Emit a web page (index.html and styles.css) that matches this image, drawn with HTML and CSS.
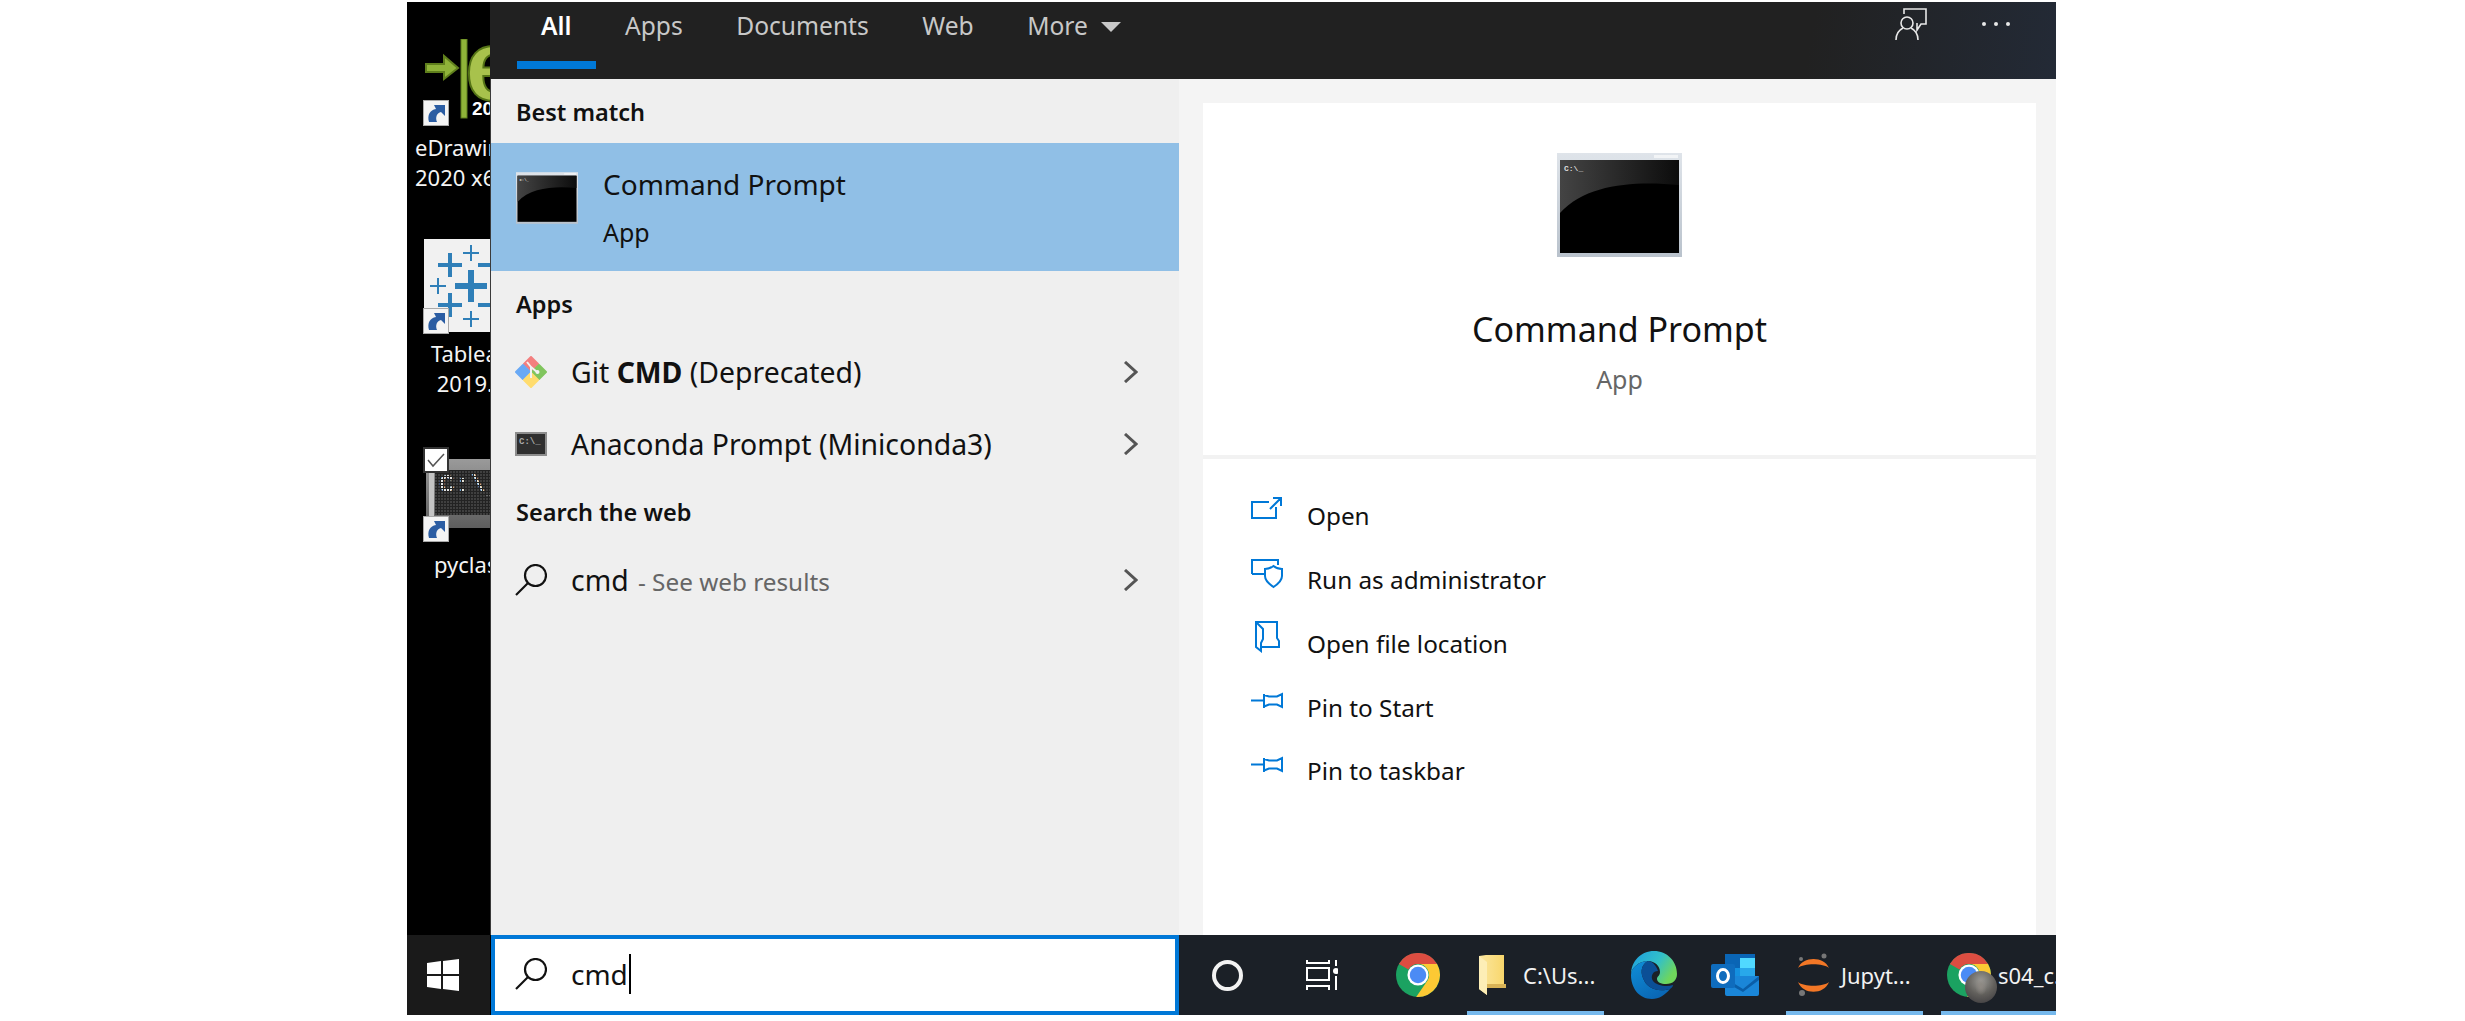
FILE: index.html
```html
<!DOCTYPE html>
<html lang="en">
<head>
<meta charset="UTF-8" />
<title>Command Prompt - Windows search</title>
<link rel="stylesheet" href="styles.css">
</head>
<body>

<!-- shared icons -->
<svg class="defs" width="0" height="0" aria-hidden="true">
  <defs>
    <linearGradient id="cmdGloss" x1="0" y1="0" x2="1" y2="0">
      <stop offset="0" stop-color="#444"/><stop offset="1" stop-color="#0c0c0c"/>
    </linearGradient>
    <linearGradient id="cmdFrame" x1="0" y1="0" x2="0" y2="1">
      <stop offset="0" stop-color="#dfe4ea"/><stop offset="1" stop-color="#b9c2cc"/>
    </linearGradient>
    <linearGradient id="edgeTop" x1="0" y1="0" x2="1" y2="0.5">
      <stop offset="0" stop-color="#1b9de2"/><stop offset="0.6" stop-color="#33c0c8"/><stop offset="1" stop-color="#6fd65c"/>
    </linearGradient>
    <linearGradient id="edgeBody" x1="0" y1="0" x2="0.6" y2="1">
      <stop offset="0" stop-color="#0f8fd8"/><stop offset="1" stop-color="#0a67b5"/>
    </linearGradient>
    <linearGradient id="folderFill" x1="0" y1="0" x2="1" y2="0">
      <stop offset="0" stop-color="#fbe7a0"/><stop offset="1" stop-color="#f8d568"/>
    </linearGradient>
    <linearGradient id="pyFrame" x1="0" y1="0" x2="0" y2="1">
      <stop offset="0" stop-color="#9a9a9a"/><stop offset="1" stop-color="#5e5e5e"/>
    </linearGradient>
    <pattern id="pyGrid" width="3" height="3" patternUnits="userSpaceOnUse">
      <rect width="2" height="2" fill="#3f3f3f"/>
    </pattern>
    <pattern id="pyDots" width="3" height="3" patternUnits="userSpaceOnUse">
      <rect width="2" height="2" fill="#e2e2e2"/>
    </pattern>

    <symbol id="i-shortcut" viewBox="0 0 26 26">
      <rect x="0.5" y="0.5" width="25" height="25" fill="#f4f4f4" stroke="#a9a9a9"/>
      <path d="M6 22C4 15 7 10 13 9L11 5H22V16L18 12C14 13 12 17 14 22Z" fill="#2b5da3"/>
    </symbol>

    <symbol id="i-cmd" viewBox="0 0 125 104">
      <rect x="0" y="0" width="125" height="104" fill="url(#cmdFrame)"/>
      <rect x="3" y="7" width="119" height="93" fill="#000"/>
      <path d="M3 7H122V32C80 28 30 30 3 60Z" fill="url(#cmdGloss)"/>
      <rect x="97" y="2" width="24" height="3" fill="#f2f4f6"/>
      <text x="7" y="18" class="cmd-prompt">C:\_</text>
    </symbol>

    <symbol id="i-search" viewBox="0 0 32 32">
      <circle cx="20.5" cy="11.5" r="10.5" fill="none" stroke="#111" stroke-width="2.2"/>
      <path d="M13 19L1 31" fill="none" stroke="#111" stroke-width="2.2"/>
    </symbol>

    <symbol id="i-chevron" viewBox="0 0 15 22">
      <path d="M2 1L13 11L2 21" fill="none" stroke="#555" stroke-width="3"/>
    </symbol>

    <symbol id="i-pin" viewBox="0 0 32 16">
      <path d="M0 7.500H13M13 1V15M13 2L18 3.500H26L31 1V14L26 11.500H18L13 13.500" fill="none" stroke="#0078d7" stroke-width="2"/>
    </symbol>

    <symbol id="i-chrome" viewBox="0 0 48 48">
      <circle cx="24" cy="24" r="24" fill="#1ba261"/>
      <path d="M3.200 12A24 24 0 0 1 44.800 12H24A12 12 0 0 0 13.600 18Z" fill="#dc4d41"/>
      <path d="M24 12H44.800A24 24 0 0 1 22 47.900L34.400 30A12 12 0 0 0 24 12Z" fill="#fcc934"/>
      <circle cx="24" cy="24" r="11.500" fill="#fff"/>
      <circle cx="24" cy="24" r="9" fill="#4b8bf5"/>
    </symbol>
  </defs>
</svg>

<div class="screen">

  <!-- desktop icons behind the start menu -->
  <div class="desktop">
    <div class="desk-app app-edrawings">
      <svg class="edraw-mark" viewBox="0 0 44 80">
        <path d="M1 25H19V17L33 29L19 40V33H1Z" fill="#8fb339" stroke="#5f7f1c" stroke-width="2"/>
        <rect x="36" y="0" width="6" height="79" fill="#8fb339" stroke="#5f7f1c"/>
      </svg>
      <span class="edraw-e">e</span>
      <span class="edraw-year">20</span>
    </div>
    <svg class="badge badge-edraw"><use href="#i-shortcut"/></svg>
    <div class="desk-label label-edraw">eDrawings<br>2020 x64</div>

    <svg class="tableau-tile" viewBox="0 0 93 93">
      <rect width="93" height="93" fill="#f1f1f1"/>
      <g fill="#2f7fb8">
        <path d="M44 31H50V44H63V50H50V63H44V50H31V44H44Z"/>
        <path d="M24 14H28V24H38V28H28V38H24V28H14V24H24Z"/>
        <path d="M24 54H28V64H38V68H28V78H24V68H14V64H24Z"/>
        <path d="M66 14H70V24H80V28H70V38H66V28H54V24H66Z"/>
        <path d="M66 54H70V64H80V68H70V78H66V68H54V64H66Z"/>
        <path d="M46 6H48V13H55V15H48V22H46V15H39V13H46Z"/>
        <path d="M46 72H48V79H55V81H48V88H46V81H39V79H46Z"/>
        <path d="M13 39H15V46H22V48H15V55H13V48H6V46H13Z"/>
      </g>
    </svg>
    <svg class="badge badge-tableau"><use href="#i-shortcut"/></svg>
    <div class="desk-label label-tableau">Tableau<br>2019.4</div>

    <svg class="pyclass-icon" viewBox="0 0 90 69">
      <rect width="90" height="69" fill="url(#pyFrame)"/>
      <rect x="3" y="2" width="5" height="65" fill="#c4c4c4"/>
      <rect x="9" y="11" width="81" height="45" fill="#222"/>
      <rect x="9" y="11" width="81" height="45" fill="url(#pyGrid)"/>
      <text x="13" y="33" class="py-prompt" fill="url(#pyDots)">C:\_</text>
    </svg>
    <svg class="check-box" viewBox="0 0 26 26">
      <rect x="1" y="1" width="24" height="24" fill="#fff" stroke="#333" stroke-width="2"/>
      <path d="M5 13L10 19L21 7" fill="none" stroke="#555" stroke-width="1.500"/>
    </svg>
    <svg class="badge badge-py"><use href="#i-shortcut"/></svg>
    <div class="desk-label label-py">pyclass</div>
  </div>

  <!-- filter tabs -->
  <header class="topbar">
    <nav class="tabs">
      <a class="tab active">All</a>
      <a class="tab">Apps</a>
      <a class="tab">Documents</a>
      <a class="tab">Web</a>
      <a class="tab">More<span class="caret-down"></span></a>
    </nav>
    <div class="top-actions">
      <svg class="feedback" viewBox="0 0 32 32" fill="none" stroke="#e8e8e8" stroke-width="1.600">
        <path d="M9 6V1H31V16H26L22 22V15"/>
        <circle cx="12" cy="15" r="6"/>
        <path d="M1 32C1 26 4 22 8 20M23 32C23 26 20 22 16 20"/>
      </svg>
      <span class="dots"><i></i><i></i><i></i></span>
    </div>
  </header>

  <!-- results -->
  <section class="results">
    <h2 class="group-title">Best match</h2>
    <div class="best-row">
      <svg class="best-icon"><use href="#i-cmd"/></svg>
      <div>
        <div class="best-name">Command Prompt</div>
        <div class="best-type">App</div>
      </div>
    </div>

    <h2 class="group-title title-apps">Apps</h2>
    <div class="row">
      <svg class="row-icon" viewBox="0 0 32 32">
        <path d="M16 1L23 8L16 15L9 8Z" fill="#f37f7f" stroke="#f37f7f" stroke-linejoin="round" stroke-width="2"/>
        <path d="M8 9L15 16L8 23L1 16Z" fill="#69a9f5" stroke="#69a9f5" stroke-linejoin="round" stroke-width="2"/>
        <path d="M24 9L31 16L24 23L17 16Z" fill="#80c55e" stroke="#80c55e" stroke-linejoin="round" stroke-width="2"/>
        <path d="M16 17L23 24L16 31L9 24Z" fill="#ffdc6e" stroke="#ffdc6e" stroke-linejoin="round" stroke-width="2"/>
        <path d="M12 6L16 11V22M16 11L22 16" fill="none" stroke="#f2f2f2" stroke-width="2"/>
        <circle cx="22.500" cy="16" r="2" fill="#f2f2f2"/>
      </svg>
      <span class="row-text">Git <b>CMD</b> (Deprecated)</span>
      <svg class="chevron"><use href="#i-chevron"/></svg>
    </div>
    <div class="row">
      <svg class="row-icon" viewBox="0 0 32 32">
        <rect x="0" y="4" width="32" height="24" fill="#8d8d8d"/>
        <rect x="2" y="6" width="28" height="20" fill="#2f2f2f"/>
        <text x="4" y="16" class="ana-prompt">C:\_</text>
      </svg>
      <span class="row-text">Anaconda Prompt (Miniconda3)</span>
      <svg class="chevron"><use href="#i-chevron"/></svg>
    </div>

    <h2 class="group-title title-web">Search the web</h2>
    <div class="row">
      <svg class="row-icon"><use href="#i-search"/></svg>
      <span class="row-text">cmd<span class="web-hint"> - See web results</span></span>
      <svg class="chevron"><use href="#i-chevron"/></svg>
    </div>
  </section>

  <!-- preview pane -->
  <aside class="preview">
    <div class="card">
      <div class="hero">
        <svg class="hero-icon"><use href="#i-cmd"/></svg>
        <div class="hero-name">Command Prompt</div>
        <div class="hero-type">App</div>
      </div>
      <ul class="actions">
        <li>
          <svg class="act-icon" viewBox="0 0 32 32" fill="none" stroke="#0078d7" stroke-width="2">
            <path d="M18 8H1V24H25V13M19 15L29 5M22 4H30V12"/>
          </svg>
          Open
        </li>
        <li>
          <svg class="act-icon" viewBox="0 0 32 32" fill="none" stroke="#0078d7" stroke-width="2">
            <path d="M1 16V2H27V7M1 16H13"/>
            <path d="M14 11C18 11 20 10 22.500 8C25 10 27 11 31 11V18C31 23 27 26 22.500 29C18 26 14 23 14 18Z"/>
          </svg>
          Run as administrator
        </li>
        <li>
          <svg class="act-icon" viewBox="0 0 32 32" fill="none" stroke="#0078d7" stroke-width="2">
            <path d="M5 1H26V17L28 20V26H11M5 1L12 8V18L10 22V30L5 26Z"/>
          </svg>
          Open file location
        </li>
        <li>
          <svg class="act-icon"><use href="#i-pin"/></svg>
          Pin to Start
        </li>
        <li>
          <svg class="act-icon"><use href="#i-pin"/></svg>
          Pin to taskbar
        </li>
      </ul>
    </div>
  </aside>

  <!-- taskbar -->
  <div class="start">
    <svg class="win-logo" viewBox="0 0 32 32" fill="#fff">
      <path d="M0 4L14 2V15H0Z"/><path d="M16 2L32 0V15H16Z"/>
      <path d="M0 17H14V30L0 28Z"/><path d="M16 17H32V32L16 30Z"/>
    </svg>
  </div>

  <div class="searchbox">
    <svg class="row-icon"><use href="#i-search"/></svg>
    <span class="query">cmd</span>
    <span class="text-caret"></span>
  </div>

  <div class="taskbar">
    <div class="slot slot-cortana"><span class="cortana"></span></div>
    <div class="slot slot-taskview">
      <svg class="taskview" viewBox="0 0 32 30" fill="none" stroke="#fff" stroke-width="2">
        <path d="M1 0V3H23V0M1 8H23V20H1ZM1 30V26H23V30M30 0V6M30 16V30"/>
        <circle cx="30" cy="11" r="3" fill="#fff" stroke="none"/>
      </svg>
    </div>
    <div class="slot slot-chrome"><svg class="chrome"><use href="#i-chrome"/></svg></div>

    <div class="running run-folder">
      <svg class="folder" viewBox="0 0 27 41">
        <path d="M7 1H25V30H27V34H8V41L0 35V2Z" fill="url(#folderFill)"/>
        <path d="M0 2L8 8V41L0 35Z" fill="#fdeeb6"/>
        <path d="M8 30H27V34H8Z" fill="#d9b356"/>
      </svg>
      <span class="run-label">C:\Us...</span>
    </div>

    <div class="slot slot-edge">
      <svg class="edge" viewBox="0 0 48 48">
        <path d="M2 24C2 10 12 0 25 0C38 0 48 10 48 23C48 29 44 33 37 33C32 33 28 31 28 28C28 25 31 25 31 21C31 15 26 10 19 10C10 10 2 17 2 24Z" fill="url(#edgeTop)"/>
        <path d="M2 24C2 17 10 10 19 10C13 13 11 20 14 27C17 36 27 42 41 38C36 44 30 48 23 48C10 48 2 37 2 24Z" fill="url(#edgeBody)"/>
        <path d="M19 10C13 13 11 20 14 27C17 36 27 42 41 38C43 37 44 35 44 34C38 36 28 35 24 30C21 25 24 20 29 20C27 14 23 10 19 10Z" fill="#0b4f96"/>
      </svg>
    </div>
    <div class="slot slot-outlook">
      <svg class="outlook" viewBox="0 0 48 42">
        <rect x="14" y="0" width="30" height="14" fill="#0a65b5"/>
        <rect x="14" y="14" width="15" height="14" fill="#1490df"/>
        <rect x="29" y="4" width="15" height="24" fill="#28a8ea"/>
        <rect x="29" y="4" width="15" height="10" fill="#50d9ff"/>
        <path d="M14 22L48 22V40Q48 42 46 42H16Q14 42 14 40Z" fill="#1a86d8"/>
        <path d="M14 24L32 35L48 22V26L32 38L14 28Z" fill="#0a5ea8"/>
        <rect x="0" y="10" width="24" height="24" rx="2" fill="#0f6cbd"/>
        <ellipse cx="12" cy="22" rx="5.500" ry="6.500" fill="none" stroke="#fff" stroke-width="3"/>
      </svg>
    </div>

    <div class="running run-jupyter">
      <svg class="jupyter" viewBox="0 0 33 44">
        <path d="M1 15C6 3 27 3 32 15C26 10 7 10 1 15Z" fill="#f37726"/>
        <path d="M1 29C7 34 26 34 32 29C27 42 6 42 1 29Z" fill="#f37726"/>
        <circle cx="27" cy="3" r="2.500" fill="#767677"/>
        <circle cx="4" cy="6" r="2" fill="#767677"/>
        <circle cx="5" cy="40" r="3" fill="#767677"/>
      </svg>
      <span class="run-label">Jupyt...</span>
    </div>

    <div class="running run-chrome">
      <svg class="chrome"><use href="#i-chrome"/></svg>
      <span class="avatar"></span>
      <span class="run-label">s04_c...</span>
    </div>
  </div>

</div>

</body>
</html>
```

FILE: styles.css
```css
* {
  box-sizing: border-box;
}
html, body {
  margin: 0;
  height: 1021px;
  overflow: hidden;
  background: #fff;
  font-family: "Noto Sans", "Liberation Sans", sans-serif;
  color: #111;
}
.defs {
  position: absolute;
}
.screen {
  margin: 2px 0 0 407px;
  width: 1649px;
  height: 1013px;
  display: grid;
  grid-template-columns: 83px 689px 1fr;
  grid-template-rows: 77px 1fr 80px;
  background: #000;
}

/* desktop strip */
.desktop {
  grid-column: 1;
  grid-row: 1 / 3;
  position: relative;
  overflow: hidden;
  background: #000;
  color: #fff;
}
.desk-label {
  position: absolute;
  font-size: 22px;
  line-height: 30px;
  white-space: nowrap;
  color: #f4f4f4;
}
.label-edraw { left: 8px; top: 130px; }
.label-tableau { left: 24px; top: 336px; text-align: center; }
.label-py { left: 27px; top: 547px; }
.badge {
  position: absolute;
  left: 16px;
  width: 26px;
  height: 26px;
}
.badge-edraw { top: 98px; }
.badge-tableau { top: 306px; }
.badge-py { top: 514px; }
.desk-app {
  position: absolute;
  left: 0;
  top: 0;
  width: 83px;
  height: 120px;
}
.edraw-mark {
  position: absolute;
  left: 18px;
  top: 37px;
  width: 44px;
  height: 80px;
}
.edraw-e {
  position: absolute;
  left: 58px;
  top: 13px;
  font: 700 100px/100px "Liberation Sans", sans-serif;
  color: #a8c24c;
  -webkit-text-stroke: 2px #557416;
}
.edraw-year {
  position: absolute;
  left: 65px;
  top: 96px;
  font: 700 19px/22px "Liberation Sans", sans-serif;
  color: #fff;
}
.tableau-tile {
  position: absolute;
  left: 17px;
  top: 237px;
  width: 93px;
  height: 93px;
}
.pyclass-icon {
  position: absolute;
  left: 19px;
  top: 457px;
  width: 90px;
  height: 69px;
}
.py-prompt {
  font: 700 26px "Liberation Mono", monospace;
}
.check-box {
  position: absolute;
  left: 16px;
  top: 445px;
  width: 26px;
  height: 26px;
}

/* top tabs */
.topbar {
  grid-column: 2 / 4;
  grid-row: 1;
  display: flex;
  justify-content: space-between;
  background: linear-gradient(100deg, #212121 0, #212121 84%, #232a36 100%);
}
.tabs {
  display: flex;
  gap: 53.500px;
  padding-left: 51px;
}
.tab {
  position: relative;
  height: 67px;
  font-size: 24.600px;
  line-height: 47px;
  color: #c8c8c8;
  white-space: nowrap;
}
.tab.active {
  color: #fff;
  font-weight: 600;
}
.tab.active::after {
  content: "";
  position: absolute;
  left: -24px;
  right: -25px;
  bottom: 0;
  height: 8px;
  background: #0078d7;
}
.caret-down {
  display: inline-block;
  margin-left: 13px;
  vertical-align: 3px;
  border-left: 10px solid transparent;
  border-right: 10px solid transparent;
  border-top: 10px solid #c8c8c8;
}
.top-actions {
  display: flex;
  gap: 55px;
  padding: 6px 46px 0 0;
}
.feedback {
  width: 32px;
  height: 32px;
}
.dots {
  display: flex;
  gap: 8px;
  height: 4px;
  margin-top: 14px;
}
.dots i {
  width: 4px;
  height: 4px;
  border-radius: 50%;
  background: #e8e8e8;
}

/* left column */
.results {
  grid-column: 2;
  grid-row: 2;
  background: #efefef;
  border-left: 1px solid #3a3a3a;
}
.group-title {
  margin: 4px 0 0;
  padding-left: 25px;
  height: 60px;
  font-size: 23.500px;
  font-weight: 600;
  line-height: 58px;
  color: #111;
}
.title-apps {
  height: 62px;
  line-height: 59px;
}
.title-web {
  margin-top: 2px;
  height: 62px;
  line-height: 59px;
}
.best-row {
  display: flex;
  align-items: flex-start;
  gap: 25px;
  height: 128px;
  padding: 29px 0 0 25px;
  background: #90bfe6;
}
.best-icon {
  width: 62px;
  height: 52px;
}
.best-name {
  margin-top: -8px;
  font-size: 28px;
  line-height: 40px;
}
.best-type {
  margin-top: 10px;
  font-size: 25px;
  line-height: 36px;
}
.row {
  display: flex;
  align-items: center;
  gap: 24px;
  height: 72px;
  padding: 0 41px 3px 24px;
}
.row-icon {
  width: 32px;
  height: 32px;
  flex: none;
}
.row-text {
  font-size: 28.400px;
  white-space: nowrap;
}
.row-text b {
  font-weight: 700;
}
.web-hint {
  margin-left: 3px;
  font-size: 24.300px;
  color: #666;
}
.chevron {
  margin-left: auto;
  width: 15px;
  height: 22px;
}
.ana-prompt {
  font: 700 9px "Liberation Mono", monospace;
  fill: #aaa;
}
.cmd-prompt {
  font: 700 8px "Liberation Mono", monospace;
  fill: #ddd;
}

/* right column */
.preview {
  grid-column: 3;
  grid-row: 2;
  padding: 24px 20px 0 24px;
  background: #f4f4f4;
}
.card {
  height: 100%;
  background: #fff;
}
.hero {
  height: 352px;
  padding-top: 50px;
  text-align: center;
}
.hero-icon {
  display: block;
  width: 125px;
  height: 104px;
  margin: 0 auto;
}
.hero-name {
  margin-top: 50px;
  font-size: 34px;
  line-height: 44px;
}
.hero-type {
  margin-top: 10px;
  font-size: 25px;
  line-height: 36px;
  color: #666;
}
.actions {
  margin: 0;
  padding: 25px 0 0 48px;
  list-style: none;
  border-top: 4px solid #f2f2f2;
}
.actions li {
  display: flex;
  align-items: center;
  gap: 24px;
  height: 63.750px;
  font-size: 24.300px;
}
.act-icon {
  width: 32px;
  height: 32px;
  margin-top: -12px;
  flex: none;
}

/* taskbar */
.start {
  grid-column: 1;
  grid-row: 3;
  display: flex;
  align-items: center;
  padding-left: 20px;
  background: #1a1a1a;
}
.win-logo {
  width: 32px;
  height: 32px;
}
.searchbox {
  grid-column: 2;
  grid-row: 3;
  display: flex;
  align-items: center;
  margin-left: 1px;
  padding: 0 0 2px 20px;
  gap: 24px;
  background: #fff;
  border: 4px solid #0078d7;
}
.query {
  font-size: 28px;
  margin-top: -1px;
}
.text-caret {
  width: 2px;
  height: 40px;
  margin-left: -23px;
  background: #000;
}
.taskbar {
  grid-column: 3;
  grid-row: 3;
  display: flex;
  overflow: hidden;
  background: #1b2027;
  color: #f2f2f2;
}
.slot {
  display: flex;
  align-items: center;
  justify-content: center;
  flex: none;
}
.slot-cortana { width: 96px; }
.slot-taskview { width: 94px; }
.slot-chrome { width: 97px; margin-right: 1px; }
.slot-edge { width: 98px; }
.slot-outlook { width: 66px; }
.cortana {
  width: 31px;
  height: 31px;
  border: 4px solid #f2f2f2;
  border-radius: 50%;
}
.taskview {
  width: 32px;
  height: 30px;
}
.chrome {
  width: 44px;
  height: 44px;
  flex: none;
}
.edge {
  width: 48px;
  height: 48px;
}
.outlook {
  width: 48px;
  height: 42px;
}
.running {
  position: relative;
  display: flex;
  align-items: center;
  flex: none;
  height: 80px;
  padding-top: 3px;
  border-bottom: 4px solid #76b9ed;
}
.run-label {
  font-size: 22px;
  white-space: nowrap;
}
.run-folder {
  width: 137px;
  padding-left: 12px;
  gap: 17px;
}
.folder {
  width: 27px;
  height: 41px;
}
.run-jupyter {
  width: 137px;
  margin-left: 18px;
  padding-left: 11px;
  gap: 11px;
}
.jupyter {
  width: 33px;
  height: 44px;
}
.run-chrome {
  flex: 1;
  margin-left: 18px;
  padding-left: 6px;
  gap: 7px;
  overflow: hidden;
}
.avatar {
  position: absolute;
  left: 24px;
  top: 36px;
  width: 32px;
  height: 32px;
  border-radius: 50%;
  background: radial-gradient(ellipse 6px 9px at 50% 48%, #8f8a84, transparent),
    radial-gradient(circle at 50% 30%, #9b9a96, #62605c 50%, #38363a);
}
```
